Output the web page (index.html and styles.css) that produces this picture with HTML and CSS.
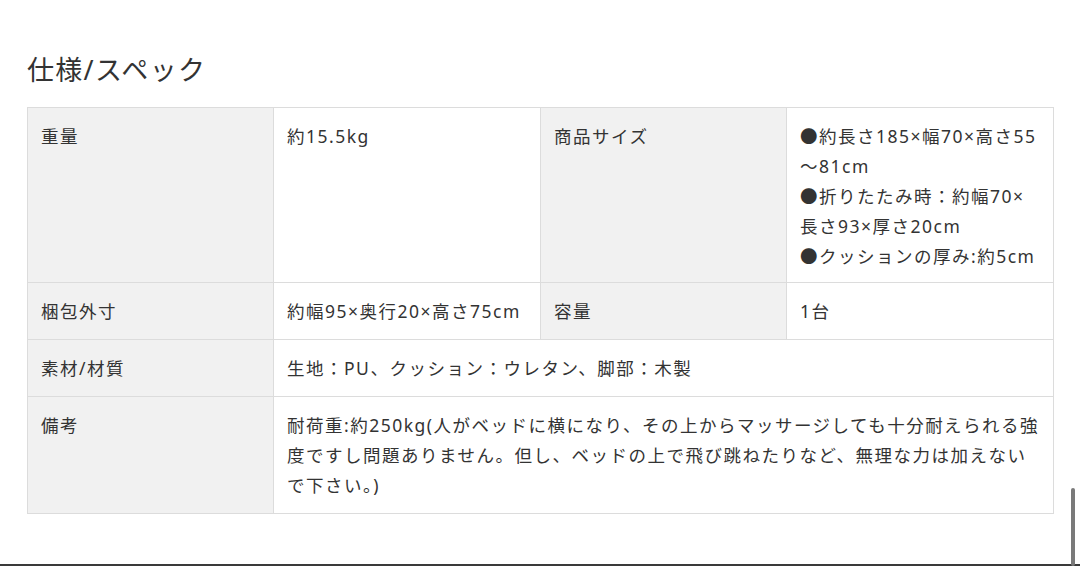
FILE: index.html
```html
<!DOCTYPE html>
<html lang="ja">
<head>
<meta charset="utf-8">
<link rel="stylesheet" href="styles.css">
</head>
<body>
<main class="page">
  <h2 class="title">仕様/スペック</h2>
  <table class="spec">
    <colgroup>
      <col class="c-label">
      <col class="c-value">
      <col class="c-label">
      <col class="c-value">
    </colgroup>
    <tr>
      <th>重量</th>
      <td>約15.5kg</td>
      <th>商品サイズ</th>
      <td class="size">●約長さ185×幅70×高さ55～81cm<br>●折りたたみ時：約幅70×長さ93×厚さ20cm<br>●クッションの厚み:約5cm</td>
    </tr>
    <tr>
      <th>梱包外寸</th>
      <td>約幅95×奥行20×高さ75cm</td>
      <th>容量</th>
      <td>1台</td>
    </tr>
    <tr>
      <th>素材/材質</th>
      <td class="wide" colspan="3">生地：PU、クッション：ウレタン、脚部：木製</td>
    </tr>
    <tr>
      <th>備考</th>
      <td class="wide" colspan="3">耐荷重:約250kg(人がベッドに横になり、その上からマッサージしても十分耐えられる強度ですし問題ありません。但し、ベッドの上で飛び跳ねたりなど、無理な力は加えないで下さい。)</td>
    </tr>
  </table>
</main>
<div class="bottom-line"></div>
<div class="scroll-thumb"></div>
</body>
</html>
```
FILE: styles.css
```css
html, body {
  margin: 0;
  padding: 0;
  background: #ffffff;
}
body {
  font-family: "Noto Sans", "Noto Sans CJK JP", sans-serif;
  color: #333333;
  width: 1080px;
  height: 566px;
  overflow: hidden;
}
.page {
  padding: 50px 27px 0 27px;
}
.title {
  margin: 0 0 18px 0;
  font-weight: 400;
  font-size: 27px;
  line-height: 39px;
  letter-spacing: 1.3px;
  color: #333333;
}
.spec {
  width: 1026px;
  border-collapse: collapse;
  table-layout: fixed;
  font-size: 17.5px;
  line-height: 30px;
  letter-spacing: 1.5px;
  border: 1px solid #dcdcdc;
}
.c-label { width: 246px; }
.c-value { width: 267px; }
.spec th,
.spec td {
  border: 1px solid #dcdcdc;
  padding: 13px 13px 13px 13px;
  vertical-align: top;
  text-align: left;
  font-weight: 400;
  color: #333333;
}
.spec th {
  background: #f1f1f1;
}
.spec td {
  background: #ffffff;
}
.spec td.wide {
  padding-right: 8px;
}
.spec td.size {
  padding-right: 13px;
  padding-bottom: 11px;
}
.bottom-line {
  position: fixed;
  left: 0;
  right: 0;
  bottom: 0;
  height: 2px;
  background: #3a3a3a;
}
.scroll-thumb {
  position: fixed;
  left: 1071px;
  top: 488px;
  width: 4px;
  height: 78px;
  background: #7a7a7a;
  border-radius: 2px;
}
```
